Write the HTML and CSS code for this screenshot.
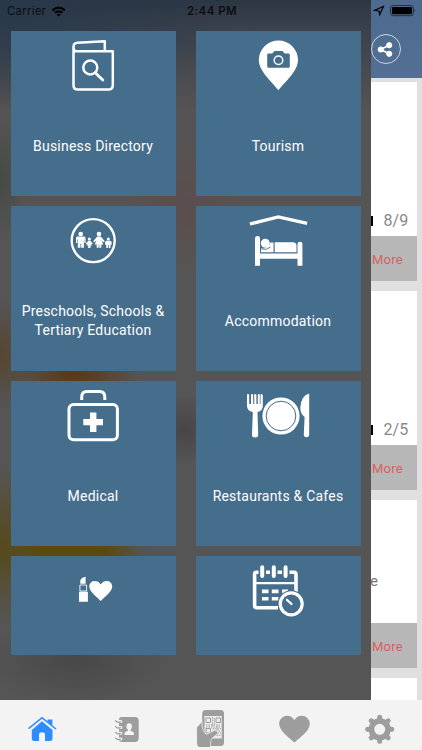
FILE: index.html
```html
<!DOCTYPE html>
<html lang="en">
<head>
<meta charset="utf-8">
<title>Directory</title>
<link rel="stylesheet" href="styles.css">
</head>
<body>
<div class="screen">
  <div class="status">
    <div class="status-left"><span>Carrier</span>
      <svg width="14" height="11" viewBox="51.500 5.500 14 11"><path d="M51.2 9.1Q58.2 2.800 65 9.100L63.500 10.700Q58.200 6 52.700 10.700ZM53.600 11.500Q58.200 7.800 62.700 11.500L61.200 13.100Q58.200 10.900 55.100 13.100ZM56 13.900Q58.200 12.500 60.300 13.900L58.200 16Z"/></svg>
    </div>
    <div class="status-time">2:44 PM</div>
    <div class="status-right">
      <svg width="44" height="14" viewBox="373 4 44 14"><path d="M374.700 10.300L383.400 6.400L379.700 14.600L379 11Z" fill="none" stroke="#000" stroke-width="1.200"/><rect x="390.600" y="5.500" width="22.800" height="10.200" rx="2.500" fill="none" stroke="#26303a" stroke-width="1"/><rect x="392" y="7" width="20" height="7.200" rx="1"/><path d="M414.600 8.700Q416.200 10.500 414.600 12.200Z" fill="#26303a"/></svg>
    </div>
  </div>

  <div class="content">
    <nav class="drawer">
      <a class="tile">
        <svg class="tile-icon" viewBox="53 31 80 65"><g fill="none" stroke="#fff" stroke-width="2.500" stroke-linejoin="round"><path d="M73.500 47V85Q73.500 89.600 78 89.600H108Q112.800 89.600 112.800 85V51.300H76Q73.500 51.300 73.500 47Q73.500 43 77.500 42.700L104.800 41.300V51"/><circle cx="90.300" cy="67.500" r="7"/><path d="M95.500 73L102.800 80" stroke-linecap="round" stroke-width="2.800"/></g></svg>
        <span class="tile-label">Business Directory</span>
      </a>
      <a class="tile">
        <svg class="tile-icon" viewBox="238 31 80 65"><path fill="#fff" d="M278.400 90.200C272 82 258.800 71 258.800 60A19.600 19.600 0 0 1 298 60C298 71 285 82 278.400 90.200Z"/><path fill="#456d8c" d="M268.500 53.500H272.300L274.500 51H282.500L284.700 53.500H288.500Q289.800 53.500 289.800 54.800V66.500Q289.800 67.800 288.500 67.800H268.500Q267.200 67.800 267.200 66.500V54.800Q267.200 53.500 268.500 53.500Z"/><circle cx="278.500" cy="60.300" r="4.300" fill="none" stroke="#fff" stroke-width="1.500"/></svg>
        <span class="tile-label">Tourism</span>
      </a>
      <a class="tile">
        <svg class="tile-icon" viewBox="53 206 80 65"><circle cx="93.200" cy="240.600" r="21.500" fill="none" stroke="#fff" stroke-width="2.400"/><g fill="#fff"><circle cx="80.700" cy="234" r="2.300"/><path d="M77.500 236.600H84Q85.600 236.600 85.600 238.500V243H84.300V239.500H83.900V247.800H81.200V243.500H80.500V247.800H77.800V239.500H77.300V243H76V238.500Q76 236.600 77.500 236.600Z"/><circle cx="89.300" cy="239" r="1.500"/><path d="M88.200 240.800H90.400L92.900 243.800L92 244.600L90.800 243.400L92 245.500H90.500V248H88.200V245.500H86.600L87.900 243.400L86.700 244.600L85.800 243.800Z"/><circle cx="99" cy="234" r="2.300"/><path d="M97.200 236.500H100.800L104.800 241.300L103.500 242.300L101.500 240.300L103.300 244.500H101.300V247.800H99.300V244.500H98.700V247.800H96.700V244.500H94.700L96.500 240.300L94.500 242.300L93.200 241.300Z"/><circle cx="108.300" cy="239" r="1.500"/><path d="M106.600 240.700H110L111.600 241.800V244.700H110.500V248H108.700V245H108V248H106.300V244.700H105.100V241.800Z"/></g></svg>
        <span class="tile-label">Preschools, Schools &amp;<br>Tertiary Education</span>
      </a>
      <a class="tile">
        <svg class="tile-icon" viewBox="238 206 80 65"><path d="M251.500 223.600L278.300 216.900L305.500 223" fill="none" stroke="#fff" stroke-width="3.300" stroke-linecap="square"/><g fill="#fff"><path d="M255 238.500Q255 236 257.500 236T260 238.500V253.500H297.500V244Q297.500 241.800 300 241.800T302.400 244V265.800H297.500V258.700H260V265.800H255Z"/><circle cx="265.300" cy="243.300" r="4.500"/><path d="M261 248.500Q269 248.500 270.500 242.500H273.500V252.300H261ZM274.700 242.300H293Q296.500 242.300 296.500 246V252.300H274.700Z"/></g><path d="M261.500 249Q267 250.500 270.500 247" fill="none" stroke="#456d8c" stroke-width=".9"/></svg>
        <span class="tile-label">Accommodation</span>
      </a>
      <a class="tile">
        <svg class="tile-icon" viewBox="53 381 80 65"><g fill="none" stroke="#fff" stroke-width="3"><rect x="69" y="404.500" width="48.400" height="35.300" rx="4.500"/><path d="M81.700 400V397Q81.700 391.500 87 391.500H99.500Q104.800 391.500 104.800 397V400"/></g><path fill="#fff" d="M90 412.500H96.400V418.900H103V425.300H96.400V432H90V425.300H83.300V418.900H90Z"/></svg>
        <span class="tile-label">Medical</span>
      </a>
      <a class="tile">
        <svg class="tile-icon" viewBox="238 381 80 65"><g fill="#fff"><circle cx="281" cy="416" r="18.600"/><path d="M247 395Q247 394 248 394T249.200 395V404H251V395Q251 394 252 394T253.200 395V404H254.200V395Q254.200 394 255.200 394T256.400 395V404H257.800V395Q257.800 394 258.800 394T259.800 395V404Q260.500 404 260.500 404V395Q260.500 394 261.500 394T262.800 395.500V406Q262.800 411 257.500 412L258.200 435Q258.200 437.500 255.100 437.500T252 435L252.800 412Q247 411 247 406Z"/><path d="M309.200 393.500V434.500Q309.200 437.300 306.500 437.300T303.800 434.500L304.600 417Q300.300 414 300.300 407.500Q301.500 395 309.200 393.500Z"/></g><circle cx="281" cy="416" r="14.800" fill="none" stroke="#456d8c" stroke-width="1"/></svg>
        <span class="tile-label">Restaurants &amp; Cafes</span>
      </a>
      <a class="tile tile-cut">
        <svg class="tile-icon" viewBox="53 556 80 65"><g fill="#fff"><path d="M80.300 583.800V580.500Q81.500 577.300 85.600 576.800V583.800ZM79 591.700H87.900V601.800H79Z"/><path d="M100.700 601C97 597 89.300 591.500 89.300 586.700C89.300 580.200 97.500 579 100.700 584.500C104 579 112.200 580.200 112.200 586.700C112.200 591.500 104.500 597 100.700 601Z"/></g><path d="M79.900 585H86.600V591H79.900Z" fill="none" stroke="#fff" stroke-width=".9"/></svg>
      </a>
      <a class="tile tile-cut">
        <svg class="tile-icon" viewBox="238 556 80 65"><g fill="none" stroke="#fff" stroke-width="3.600"><path d="M258.500 572.300H256.500Q254.600 572.300 254.600 574.300V605.500Q254.600 607.700 256.800 607.700H278M266 572.300H270M277.500 572.300H282M289.500 572.300H294Q296 572.300 296 574.300V592"/><path d="M255 583.200H295.500" stroke-width="2.200"/><path stroke-width="4" stroke-linecap="round" d="M262.200 567.300V576M273.800 567.300V576M285.600 567.300V576"/><path stroke-width="3.600" d="M262 591.400H268.500M271.800 591.400H278.500M282 591.400H288M262 598.700H268.500M271.800 598.700H278.500"/></g><circle cx="291.200" cy="603.800" r="13.500" fill="#456d8c"/><circle cx="291.200" cy="603.800" r="11" fill="none" stroke="#fff" stroke-width="3.200"/><path d="M287 599.800L291.500 604" stroke="#fff" stroke-width="2.300" stroke-linecap="round"/></svg>
      </a>
    </nav>

    <main class="feed">
      <header class="feed-header">
        <svg width="32" height="32" viewBox="370 33 32 32"><circle cx="386" cy="49" r="14.500" fill="none" stroke="#ccd6e2" stroke-width="1"/><g fill="#fff" stroke="#fff"><path d="M389.300 45.300L380.500 49.500L389.300 53.700" fill="none" stroke-width="1.700"/><circle cx="389.200" cy="45.200" r="2.600"/><circle cx="380.700" cy="49.500" r="2.600"/><circle cx="389.200" cy="53.800" r="2.600"/></g></svg>
      </header>
      <section class="card">
        <div class="card-body"><i class="mark"></i><span class="count">8/9</span></div>
        <div class="card-more">More</div>
      </section>
      <section class="card">
        <div class="card-body"><i class="mark"></i><span class="count">2/5</span></div>
        <div class="card-more">More</div>
      </section>
      <section class="card card-short">
        <div class="card-body"><span class="excerpt">e</span></div>
        <div class="card-more">More</div>
      </section>
      <section class="card card-last"></section>
    </main>
  </div>

  <footer class="tabs">
    <a class="tab"><svg viewBox="22.200 705 40 42"><g fill="#2f8cff"><path d="M42.200 721.200L52.700 730V738.500Q52.700 741 50 741H45.200V734.500Q45.200 732.300 42.300 732.300T39.200 734.500V741H34.500Q32 741 32 738.500V730Z"/><path d="M28.300 728.100L42.200 716.700L47.800 721.300V719.500H52.600V725.200L56.600 728.400L55.700 729.500L42.200 718.800L29.200 729.300Z"/></g></svg></a>
    <a class="tab"><svg viewBox="106.600 705 40 42"><path fill="#9d9d9d" d="M121 717H134.500Q138.300 717 138.300 721V738Q138.300 742 134.500 742H121Q118.600 742 118.600 739.300V719.800Q118.600 717 121 717Z"/><g fill="none" stroke="#f3f3f3" stroke-width="3"><path d="M117.500 721.500H120.500M117.500 727.500H120.500M117.500 733.200H120.500M117.500 739H120.500" stroke-linecap="round"/></g><g fill="none" stroke="#9d9d9d" stroke-width="1.300" stroke-linecap="round"><path d="M120 721.800Q117 723 115.200 720.800M120 727.700Q117 729 115.200 726.700M120 733.400Q117 734.700 115.200 732.400M120 739.200Q117 740.500 115.200 738.200"/></g><g fill="#f5f5f5"><ellipse cx="128.800" cy="726.500" rx="2.700" ry="3.200"/><path d="M127.500 728.500H130.100V731Q133.500 731.500 133.500 733.500V735H124.200V733.500Q124.200 731.500 127.500 731Z"/></g></svg></a>
    <a class="tab"><svg viewBox="191 705 40 42"><rect x="202.200" y="710" width="21.800" height="36" rx="3.500" fill="#9d9d9d"/><rect x="204.500" y="716" width="17.200" height="22.500" fill="#ececec"/><g fill="none" stroke="#9d9d9d" stroke-width="1"><path d="M206 718H210.500V722.500H206ZM216 718H220.500V722.500H216ZM206 728.500H210.500V733H206Z"/><path stroke-dasharray="1.500 1" d="M212.500 717V726M214.300 718V725M206 725H220.500M206 727H220M212.500 728.800H221M213.500 731H220M215 733H221M214 735.300H221M217 726V736"/></g><path fill="#9d9d9d" stroke="#f3f3f3" stroke-width=".7" d="M201.800 721.500L196.700 727.500V743Q196.700 748 202 748H210.500V743Q210.500 739 213.500 737L217.800 733.500Q218 730 214.500 730.300L206.500 734.500L203.800 731.500L202.200 727Z"/></svg></a>
    <a class="tab"><svg viewBox="275.400 705 40 42"><path fill="#9d9d9d" d="M294.800 742.500C290 738 279.600 731 279.600 724C279.600 715.300 290.500 712.500 294.800 720C299.100 712.500 310.200 715.300 310.200 724C310.200 731 299.600 738 294.800 742.500Z"/></svg></a>
    <a class="tab"><svg viewBox="359.800 705 40 42"><circle cx="379.500" cy="729.300" r="8.300" fill="none" stroke="#9d9d9d" stroke-width="5.600"/><g fill="none" stroke="#9d9d9d" stroke-width="5" stroke-linecap="round"><path d="M379.500 717.300V720M379.500 738.600V741.300M367.500 729.300H370.200M388.800 729.300H391.500"/><path d="M371 720.800L372.900 722.700M386.100 735.900L388 737.800M371 737.800L372.900 735.900M386.100 722.700L388 720.800"/></g></svg></a>
  </footer>
</div>
</body>
</html>
```
FILE: styles.css
```css
* { box-sizing: border-box; }
body { margin: 0; font-family: Roboto, "Liberation Sans", sans-serif; }
svg { display: block; }

.screen {
  position: relative;
  width: 422px;
  height: 750px;
  overflow: hidden;
  display: flex;
  flex-direction: column;
}

.status {
  position: absolute;
  inset: 0 0 auto 0;
  z-index: 2;
  height: 22px;
  display: grid;
  grid-template-columns: 1fr auto 1fr;
  align-items: center;
  padding: 0 5px 0 7px;
  font-family: Inter, sans-serif;
  font-size: 11.500px;
  letter-spacing: .2px;
  color: #0c0e12;
}
.status-left { display: flex; align-items: center; gap: 5.500px; }
.status-time { font-weight: 600; letter-spacing: .45px; }
.status-right { display: flex; justify-content: flex-end; }

.content { flex: 1; min-height: 0; display: flex; }

.drawer {
  width: 371px;
  padding: 31px 10.500px 0;
  display: grid;
  grid-template-columns: 165px 165px;
  grid-template-rows: 165px 165px 165px 99px;
  gap: 10px 20px;
  background:
    radial-gradient(ellipse 75px 35px at 72px 553px, #5a4a10 0 45%, transparent),
    radial-gradient(ellipse 70px 80px at 0 545px, #57491d, transparent),
    radial-gradient(ellipse 65px 28px at 75px 375px, #5b3a17 10%, transparent),
    radial-gradient(ellipse 35px 55px at 0 355px, #564530, transparent),
    radial-gradient(ellipse 90px 45px at 75px 660px, #484848, transparent),
    radial-gradient(ellipse 60px 70px at 185px 205px, #5c4d4d, transparent),
    radial-gradient(ellipse 40px 35px at 185px 430px, #484547, transparent),
    radial-gradient(ellipse 30px 60px at 0 180px, #454a42, transparent),
    radial-gradient(ellipse 240px 110px at 0 0, #28384b, transparent),
    linear-gradient(#2c3643 0, #3a414b 28px, #555354 110px, #555 220px);
}

.tile {
  display: flex;
  flex-direction: column;
  align-items: center;
  background: #456d8c;
  color: #fff;
  overflow: hidden;
}
.tile-icon { width: 80px; height: 65px; flex: none; }
.tile-label {
  height: 101px;
  display: flex;
  align-items: center;
  text-align: center;
  font-size: 14px;
  line-height: 19px;
  letter-spacing: .22px;
  white-space: nowrap;
}

.feed { flex: 1; min-width: 0; background: #e0e0e0; overflow: hidden; }
.feed-header { height: 78px; padding: 33px 0 0; background: linear-gradient(#4c6b8f, #536f94); }
.feed-header svg { margin-left: -1px; }
.card { height: 199px; margin: 0 5.500px 10px 0; display: flex; flex-direction: column; background: #fff; }
.feed-header + .card { margin-top: 4px; }
.card-body { flex: 1; display: flex; align-items: flex-end; padding-bottom: 4.500px; color: #888; }
.mark { width: 2px; height: 10px; margin-bottom: 5px; background: #000; }
.count { margin-left: 10.500px; font-size: 16px; line-height: 20px; letter-spacing: .1px; }
.card-more { height: 45.500px; line-height: 47px; padding-left: 1px; background: #b7b7b7; color: #d9605f; font-size: 13px; letter-spacing: .2px; }
.card-short { height: 168px; }
.card-short .card-body { padding-bottom: 32px; }
.excerpt { margin-left: -1px; font-size: 15px; line-height: 20px; color: #777; }
.card-last { height: 60px; }

.tabs {
  height: 50px;
  flex: none;
  display: grid;
  grid-template-columns: repeat(5, 1fr);
  padding-top: 5px;
  background: #f3f3f3;
}
.tab svg { width: 40px; height: 42px; margin: 0 auto; }
```
